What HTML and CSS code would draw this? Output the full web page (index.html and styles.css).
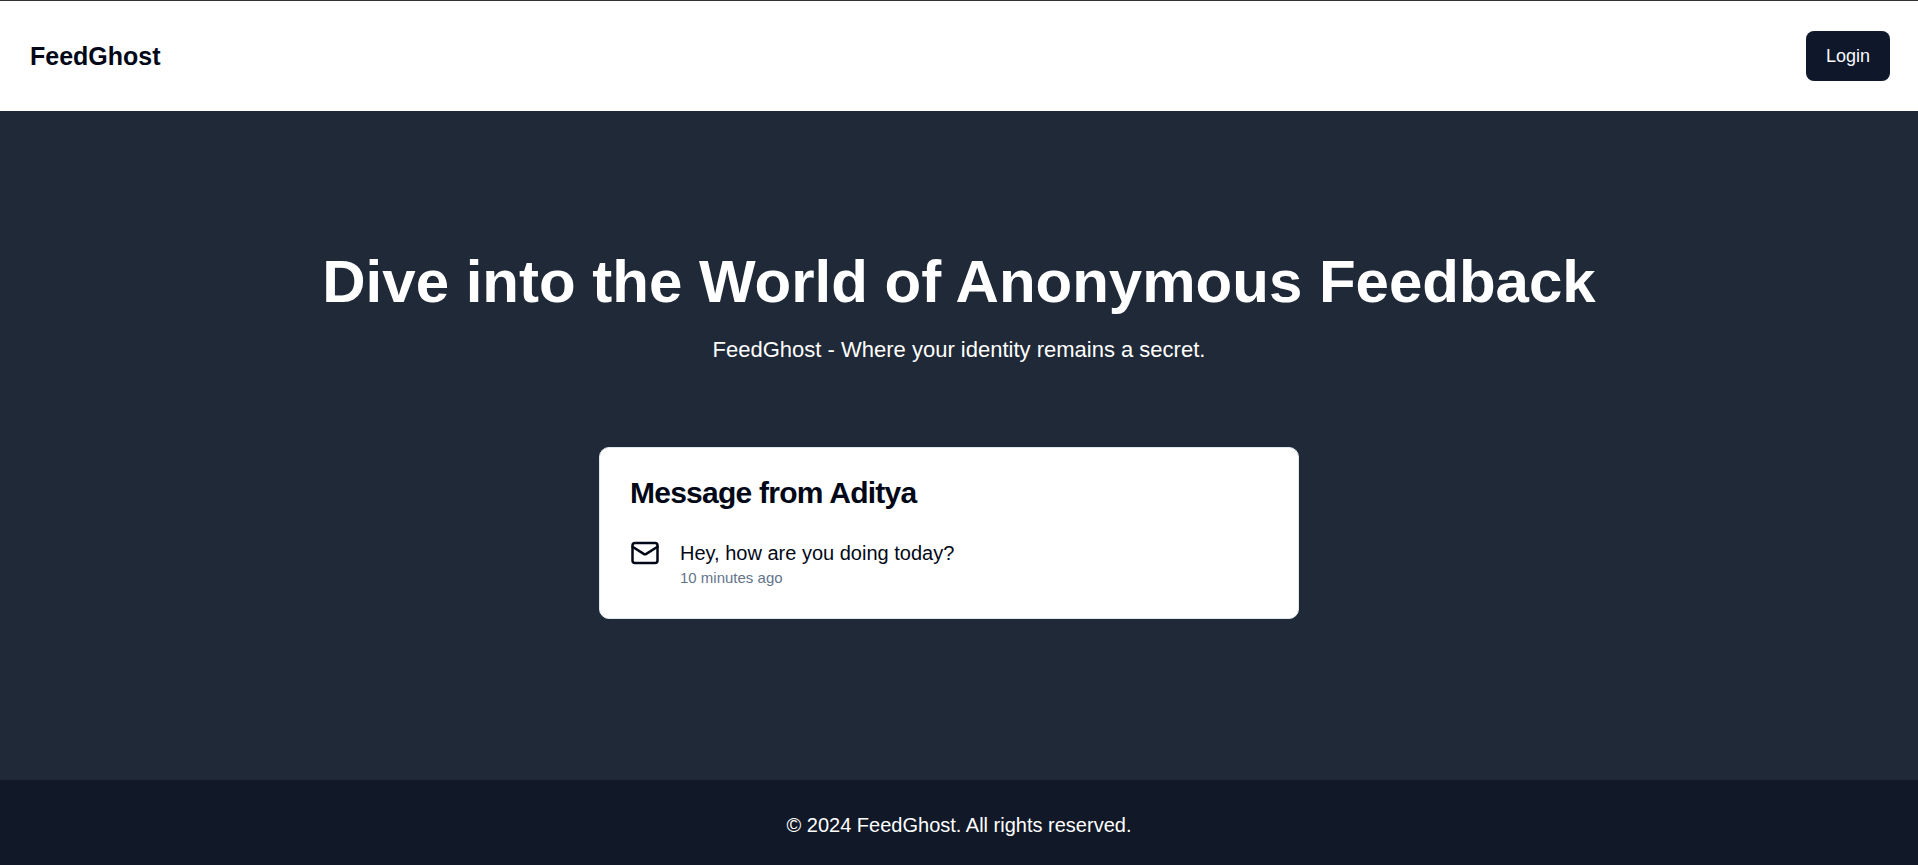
FILE: index.html
```html
<!DOCTYPE html>
<html lang="en">
<head>
<meta charset="utf-8">
<title>FeedGhost</title>
<link rel="stylesheet" href="styles.css">
</head>
<body>
<header class="navbar">
  <a class="brand" href="#">FeedGhost</a>
  <button class="login" type="button">Login</button>
</header>
<main class="hero">
  <section class="intro">
    <h1 class="title">Dive into the World of Anonymous Feedback</h1>
    <p class="subtitle">FeedGhost - Where your identity remains a secret.</p>
  </section>
  <section class="carousel">
    <article class="card">
      <h2 class="card-title">Message from Aditya</h2>
      <div class="message">
        <svg class="mail" viewBox="0 0 24 24" aria-hidden="true">
          <rect width="20" height="16" x="2" y="4" rx="2"/>
          <path d="m22 7-8.97 5.7a1.94 1.94 0 0 1-2.06 0L2 7"/>
        </svg>
        <div>
          <p class="message-text">Hey, how are you doing today?</p>
          <p class="message-time">10 minutes ago</p>
        </div>
      </div>
    </article>
  </section>
</main>
<footer class="footer">© 2024 FeedGhost. All rights reserved.</footer>
</body>
</html>
```
FILE: styles.css
```css
*, *::before, *::after { box-sizing: border-box; }
body, h1, h2, p { margin: 0; }
body {
  display: flex;
  flex-direction: column;
  min-height: 100vh;
  background: #1f2937;
  color: #020817;
  font-family: "Liberation Sans", Arial, sans-serif;
  font-size: 20px;
  line-height: 30px;
}
.navbar {
  display: flex;
  align-items: center;
  justify-content: space-between;
  padding: 30px 28px 30px 30px;
  border-top: 1px solid #333333;
  background: #ffffff;
}
.brand {
  color: inherit;
  font-size: 25px;
  font-weight: 700;
  line-height: 35px;
  text-decoration: none;
}
.login {
  padding: 12px 20px;
  border: 0;
  border-radius: 8px;
  background: #0f172a;
  color: #f8fafc;
  font-family: inherit;
  font-size: 18px;
  line-height: 26px;
}
.hero {
  display: flex;
  flex: 1;
  flex-direction: column;
  align-items: center;
  justify-content: center;
  gap: 60px;
  padding: 30px;
  color: #ffffff;
}
.intro { text-align: center; }
.title {
  font-size: 60px;
  font-weight: 700;
  line-height: 60px;
}
.subtitle {
  margin-top: 20px;
  font-size: 22px;
  line-height: 35px;
}
.carousel {
  width: 100%;
  max-width: 720px;
  padding: 20px 20px 20px 0;
}
.card {
  padding: 30px;
  border: 1px solid #e2e8f0;
  border-radius: 10px;
  background: #ffffff;
  color: #020817;
}
.card-title {
  font-size: 30px;
  font-weight: 700;
  line-height: 30px;
  letter-spacing: -0.025em;
}
.message {
  display: flex;
  align-items: flex-start;
  gap: 20px;
  margin-top: 30px;
}
.mail {
  flex: none;
  width: 30px;
  height: 30px;
  fill: none;
  stroke: currentColor;
  stroke-width: 2;
  stroke-linecap: round;
  stroke-linejoin: round;
}
.message-time {
  color: #64748b;
  font-size: 15px;
  line-height: 20px;
}
.footer {
  padding: 30px 30px 25px;
  background: #111827;
  color: #ffffff;
  text-align: center;
}
```
